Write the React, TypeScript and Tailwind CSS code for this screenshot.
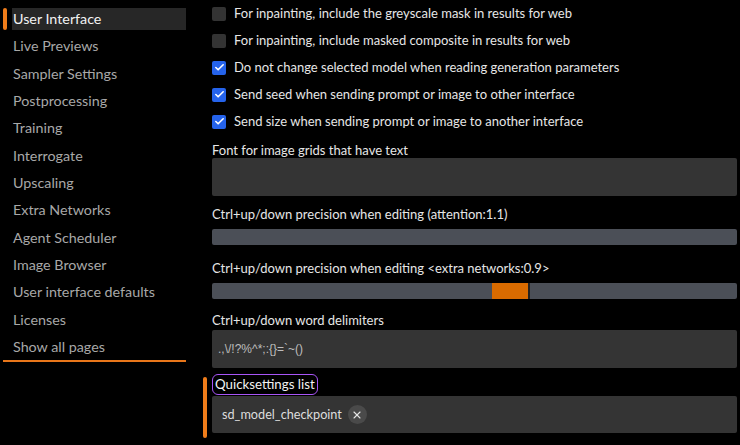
import { Check, X } from 'lucide-react'

const pages = [
  'User Interface',
  'Live Previews',
  'Sampler Settings',
  'Postprocessing',
  'Training',
  'Interrogate',
  'Upscaling',
  'Extra Networks',
  'Agent Scheduler',
  'Image Browser',
  'User interface defaults',
  'Licenses',
  'Show all pages'
]

const checks = [
  { label: 'For inpainting, include the greyscale mask in results for web', on: false },
  { label: 'For inpainting, include masked composite in results for web', on: false },
  { label: 'Do not change selected model when reading generation parameters', on: true },
  { label: 'Send seed when sending prompt or image to other interface', on: true },
  { label: 'Send size when sending prompt or image to another interface', on: true }
]

function Sidebar() {
  return (
    <nav className="w-[200px] shrink-0 pt-2 pl-[3px]">
      <ul className="flex flex-col gap-[5.33px] w-[183px]">
        {pages.map((p, i) => (
          <li key={p} className="flex h-[22px] items-stretch">
            <span className={`w-[4px] rounded-full ${i === 0 ? 'bg-[#f07d1a]' : ''}`} />
            <span
              className={`ml-[5px] flex-1 pl-[1px] text-[14.3px] leading-[22px] ${
                i === 0 ? 'bg-[#272727] text-[#f2f2f2]' : 'text-[#a8a8a8]'
              }`}
            >
              {p}
            </span>
          </li>
        ))}
      </ul>
      <div className="mt-[2px] h-[2px] w-[183px] bg-[#e8761a]" />
    </nav>
  )
}

function Slider({ thumb }: { thumb?: number }) {
  return (
    <div className="flex h-[16px] rounded-[2px] bg-[#4b4f57]">
      {thumb !== undefined && (
        <div
          className="h-full w-[38px] border-r-2 border-[#222] bg-[#d96b00]"
          style={{ marginLeft: thumb }}
        />
      )}
    </div>
  )
}

export default function App() {
  return (
    <div className="flex h-[445px] w-[740px] overflow-hidden bg-black font-['Lato',sans-serif] text-[13px] text-[#e6e6e6]">
      <Sidebar />
      <main className="flex-1 pl-[3px] pr-[3px]">
        <div className="pl-[9px]">
          {checks.map((c) => (
            <label key={c.label} className="flex h-[27px] items-center gap-[8px]">
              <span
                className={`flex h-[14px] w-[14px] items-center justify-center rounded-[2px] ${
                  c.on ? 'bg-[#2563eb]' : 'bg-[#333333]'
                }`}
              >
                {c.on && <Check className="h-[11px] w-[11px] text-white" strokeWidth={3.5} />}
              </span>
              <span>{c.label}</span>
            </label>
          ))}

          <div className="mt-[7px] h-[16px] leading-[16px]">Font for image grids that have text</div>
          <div className="h-[38px] rounded-[2px] bg-[#343434]" />

          <div className="mt-[10px] h-[16px] leading-[16px]">
            Ctrl+up/down precision when editing (attention:1.1)
          </div>
          <div className="mt-[7px]">
            <Slider />
          </div>

          <div className="mt-[15px] h-[16px] leading-[16px]">
            Ctrl+up/down precision when editing &lt;extra networks:0.9&gt;
          </div>
          <div className="mt-[7px]">
            <Slider thumb={280} />
          </div>

          <div className="mt-[13px] h-[16px] leading-[16px]">Ctrl+up/down word delimiters</div>
          <div className="mt-[2px] flex h-[38px] items-center rounded-[2px] bg-[#343434] pl-[6px] font-['Liberation_Sans',sans-serif] text-[12px] text-[#bdbdbd]">
            .,\/!?%^*;:{'{}'}=`~()
          </div>
        </div>

        <div className="mt-[6px] flex">
          <span className="mt-[3px] w-[4px] rounded-full bg-[#f07d1a]" />
          <div className="ml-[5px] flex-1">
            <div className="flex h-[21px] w-fit items-center rounded-[6px] border-[1.5px] border-[#a855f7] px-[2px] text-[13.3px] text-[#f2f2f2]">
              Quicksettings list
            </div>
            <div className="mt-[1px] flex h-[37px] items-center gap-[6px] rounded-[2px] bg-[#343434] pl-[10px] text-[12.7px] text-[#dddddd]">
              <span>sd_model_checkpoint</span>
              <span className="flex h-[19px] w-[19px] items-center justify-center rounded-full bg-[#4a4a4a]">
                <X className="h-[12px] w-[12px] text-[#e6e6e6]" strokeWidth={2.2} />
              </span>
            </div>
            <div className="h-[5px]" />
          </div>
        </div>
      </main>
    </div>
  )
}
